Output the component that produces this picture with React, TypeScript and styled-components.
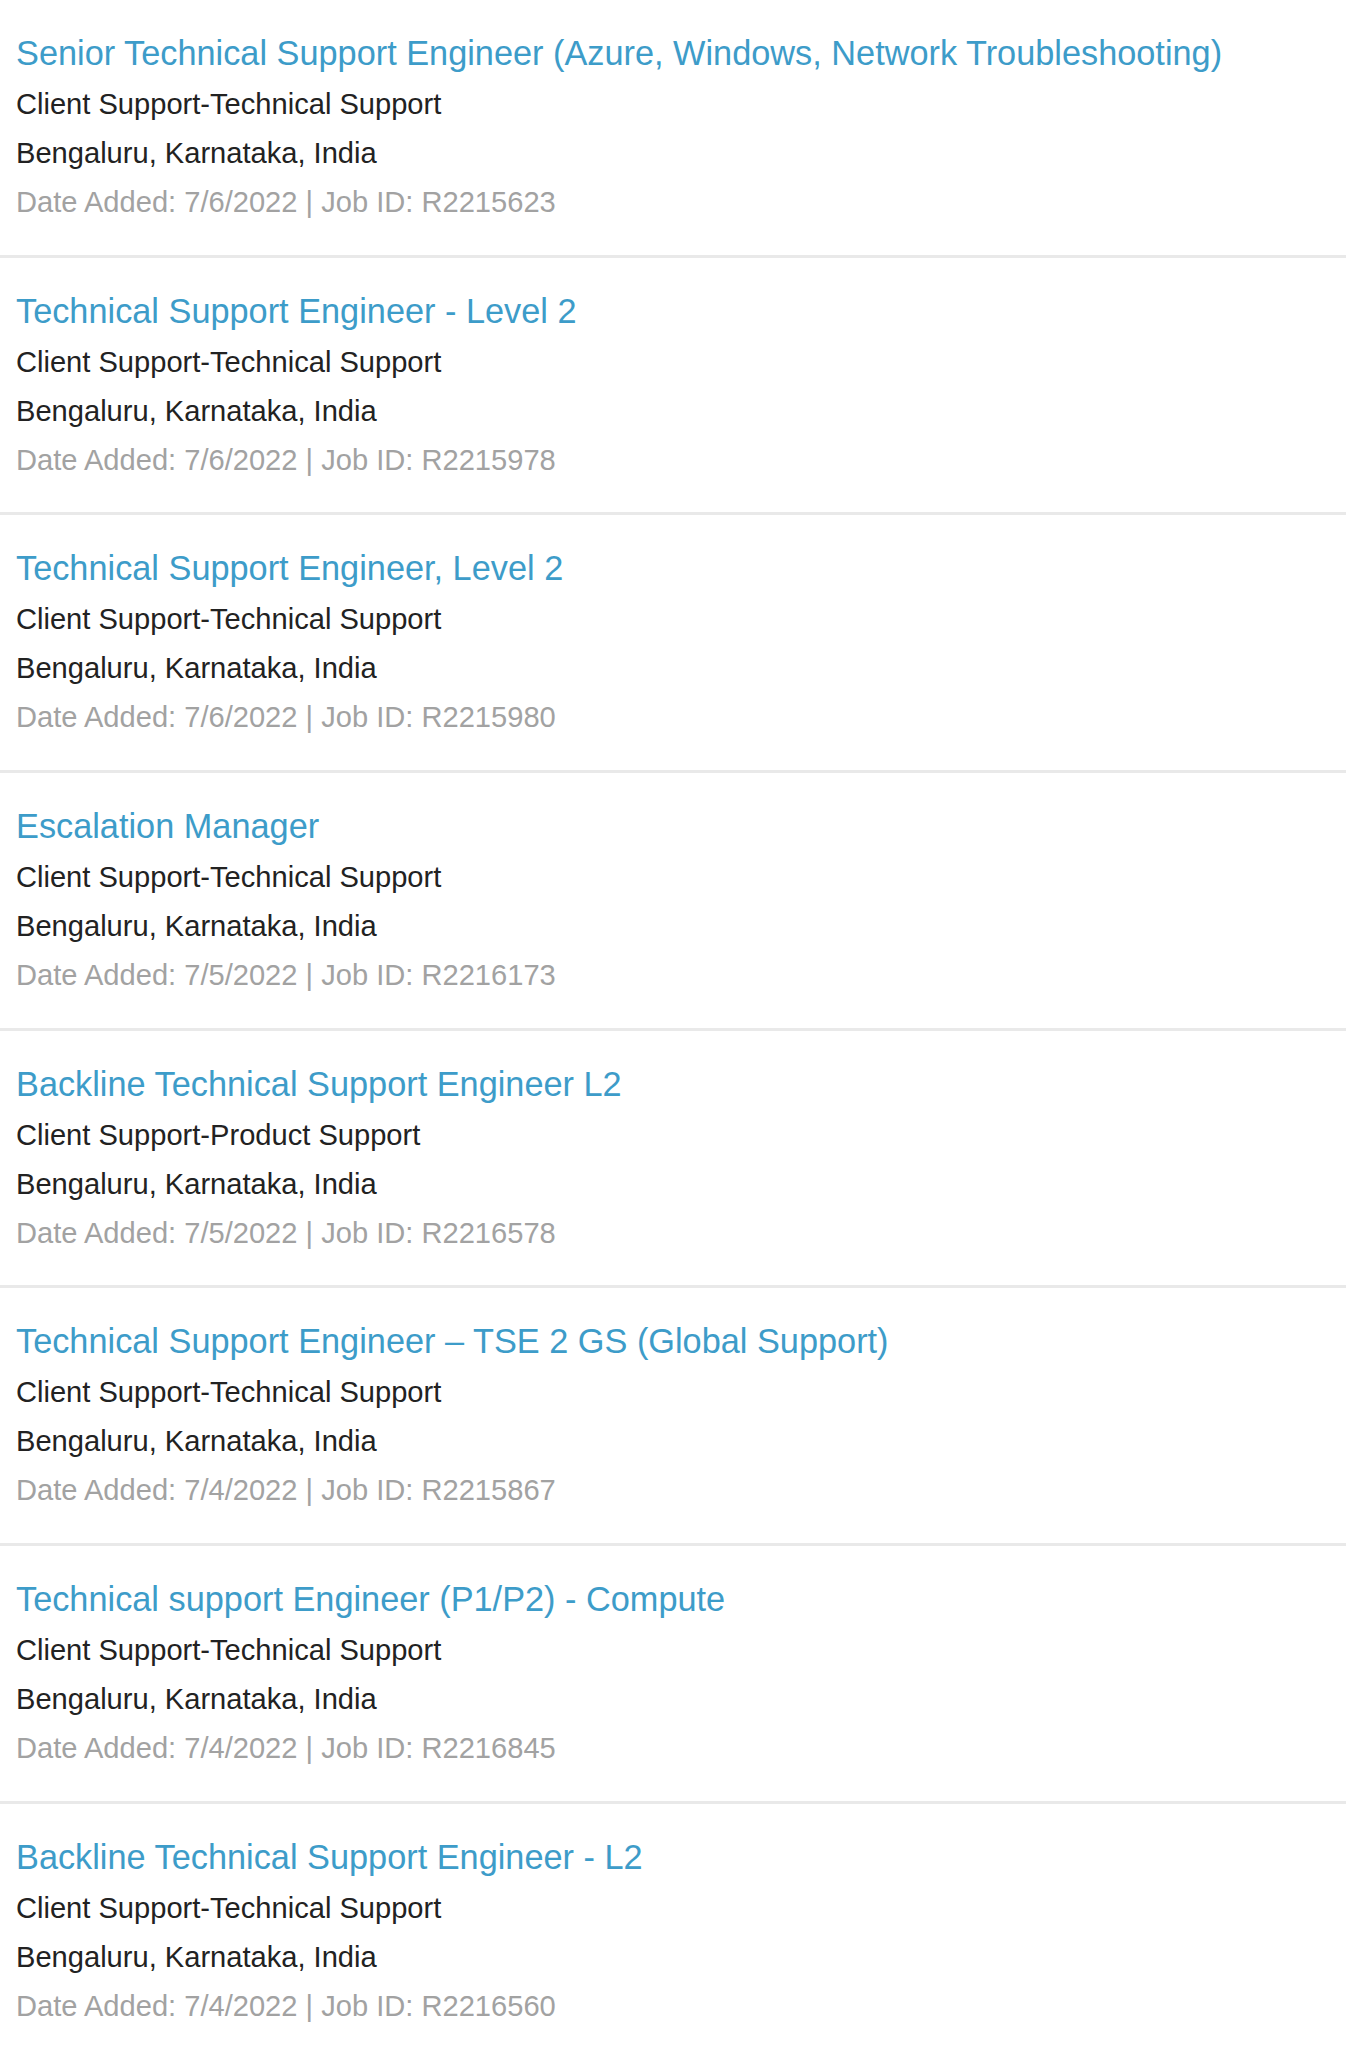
import React from 'react';
import styled, { createGlobalStyle } from 'styled-components';

type JobType = {
  title: string;
  category: string;
  location: string;
  added: string;
  id: string;
};

const jobs: JobType[] = [
  {
    title:
      'Senior Technical Support Engineer (Azure, Windows, Network Troubleshooting)',
    category: 'Client Support-Technical Support',
    location: 'Bengaluru, Karnataka, India',
    added: '7/6/2022',
    id: 'R2215623',
  },
  {
    title: 'Technical Support Engineer - Level 2',
    category: 'Client Support-Technical Support',
    location: 'Bengaluru, Karnataka, India',
    added: '7/6/2022',
    id: 'R2215978',
  },
  {
    title: 'Technical Support Engineer, Level 2',
    category: 'Client Support-Technical Support',
    location: 'Bengaluru, Karnataka, India',
    added: '7/6/2022',
    id: 'R2215980',
  },
  {
    title: 'Escalation Manager',
    category: 'Client Support-Technical Support',
    location: 'Bengaluru, Karnataka, India',
    added: '7/5/2022',
    id: 'R2216173',
  },
  {
    title: 'Backline Technical Support Engineer L2',
    category: 'Client Support-Product Support',
    location: 'Bengaluru, Karnataka, India',
    added: '7/5/2022',
    id: 'R2216578',
  },
  {
    title: 'Technical Support Engineer \u2013 TSE 2 GS (Global Support)',
    category: 'Client Support-Technical Support',
    location: 'Bengaluru, Karnataka, India',
    added: '7/4/2022',
    id: 'R2215867',
  },
  {
    title: 'Technical support Engineer (P1/P2) - Compute',
    category: 'Client Support-Technical Support',
    location: 'Bengaluru, Karnataka, India',
    added: '7/4/2022',
    id: 'R2216845',
  },
  {
    title: 'Backline Technical Support Engineer - L2',
    category: 'Client Support-Technical Support',
    location: 'Bengaluru, Karnataka, India',
    added: '7/4/2022',
    id: 'R2216560',
  },
];

const GlobalStyle = createGlobalStyle`
  body {
    margin: 0;
    background: #fff;
    font-family: "Liberation Sans", Arial, sans-serif;
  }
`;

const JobList = styled.ul`
  list-style: none;
  margin: 0;
  padding: 0;
`;

// item is ~257.7px tall with its rule
const JobItem = styled.li`
  padding: 27px 16px 27.7px;
  border-bottom: 3px solid #e9e9e9;
`;

const JobTitle = styled.a`
  display: block;
  font-size: 34.3px;
  line-height: 53px;
  color: #3d9cc9;
  text-decoration: none;
  white-space: nowrap;
  cursor: pointer;
`;

type LineProps = {
  readonly muted?: boolean;
};

const Line = styled.div<LineProps>`
  font-size: 29.1px;
  line-height: 49px;
  color: ${(props) => (props.muted ? '#a2a2a2' : '#222')};
`;

const App = function App() {
  return (
    <>
      <GlobalStyle />
      <JobList>
        {jobs.map((job) => (
          <JobItem key={job.id}>
            <JobTitle>{job.title}</JobTitle>
            <Line>{job.category}</Line>
            <Line>{job.location}</Line>
            <Line muted>
              Date Added: {job.added} | Job ID: {job.id}
            </Line>
          </JobItem>
        ))}
      </JobList>
    </>
  );
};

export default App;
